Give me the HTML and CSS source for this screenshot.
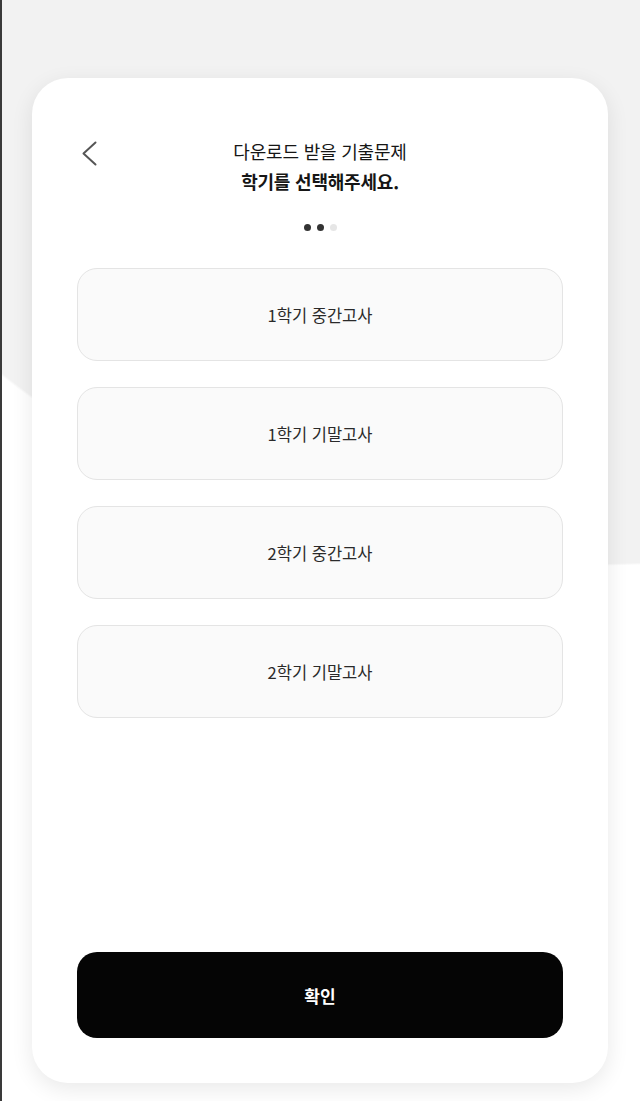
FILE: index.html
```html
<!DOCTYPE html>
<html lang="ko">
<head>
    <meta charset="UTF-8">
    <meta name="viewport" content="width=device-width, initial-scale=1.0">
    <title>기출문제 다운로드</title>
    <link rel="stylesheet" href="styles.css">
</head>
<body>
    <div class="page">
        <div class="card">
            <!-- 상단 헤더 -->
            <div class="header">
                <button class="back" type="button" aria-label="뒤로">
                    <svg width="18" height="28" viewBox="0 0 18 28">
                        <path d="M15.5 2.5 L3.5 13.5 L15.5 24.5" fill="none" stroke="#555" stroke-width="2" stroke-linecap="round" stroke-linejoin="round"/>
                    </svg>
                </button>
                <h1 class="title">다운로드 받을 기출문제<br><strong>학기를 선택해주세요.</strong></h1>
                <span></span>
            </div>

            <div class="steps">
                <span class="dot on"></span>
                <span class="dot on"></span>
                <span class="dot"></span>
            </div>

            <!-- 학기 선택 -->
            <ul class="options">
                <li class="option">1학기 중간고사</li>
                <li class="option">1학기 기말고사</li>
                <li class="option">2학기 중간고사</li>
                <li class="option">2학기 기말고사</li>
            </ul>

            <button class="confirm" type="button">확인</button>
        </div>
    </div>
</body>
</html>
```

FILE: styles.css
```css
* {
    box-sizing: border-box;
}
body {
    margin: 0;
    font-family: "Noto Sans CJK KR", "Noto Sans", sans-serif;
    color: #1a1a1a;
}
.page {
    width: 640px;
    height: 1101px;
    border-left: 2px solid #3a3a3a;
    padding: 78px 32px 18px 30px;
    background: radial-gradient(800px 589px at 588px -23px, #f2f2f2 99.6%, #fff 100%);
    overflow: hidden;
}
.card {
    height: 1005px;
    background: #fff;
    border-radius: 36px;
    box-shadow: 0 6px 22px rgba(0, 0, 0, 0.09);
    padding: 58px 45px 45px;
    display: flex;
    flex-direction: column;
}
.header {
    display: grid;
    grid-template-columns: 1fr auto 1fr;
    align-items: start;
}
.back {
    justify-self: start;
    background: none;
    border: none;
    padding: 0;
    margin: 4px 0 0 3px;
    cursor: pointer;
    line-height: 0;
}
.title {
    margin: 0;
    font-size: 18px;
    font-weight: 400;
    line-height: 30px;
    letter-spacing: -0.2px;
    text-align: center;
    color: #161616;
}
.title strong {
    font-weight: 700;
}
.steps {
    display: flex;
    justify-content: center;
    gap: 6px;
    margin-top: 28px;
}
.dot {
    width: 7px;
    height: 7px;
    border-radius: 50%;
    background: #e6e6e6;
}
.dot.on {
    background: #333;
}
.options {
    list-style: none;
    margin: 37px 0 0;
    padding: 0;
    display: flex;
    flex-direction: column;
    gap: 26px;
}
.option {
    height: 93px;
    display: flex;
    align-items: center;
    justify-content: center;
    background: #fafafa;
    border: 1.5px solid #e4e4e4;
    border-radius: 20px;
    font-size: 16.5px;
    color: #2a2a2a;
    cursor: pointer;
}
.confirm {
    margin-top: auto;
    height: 86px;
    border: none;
    border-radius: 20px;
    background: #050505;
    color: #fff;
    font-family: inherit;
    font-size: 17px;
    font-weight: 700;
    cursor: pointer;
}
```
